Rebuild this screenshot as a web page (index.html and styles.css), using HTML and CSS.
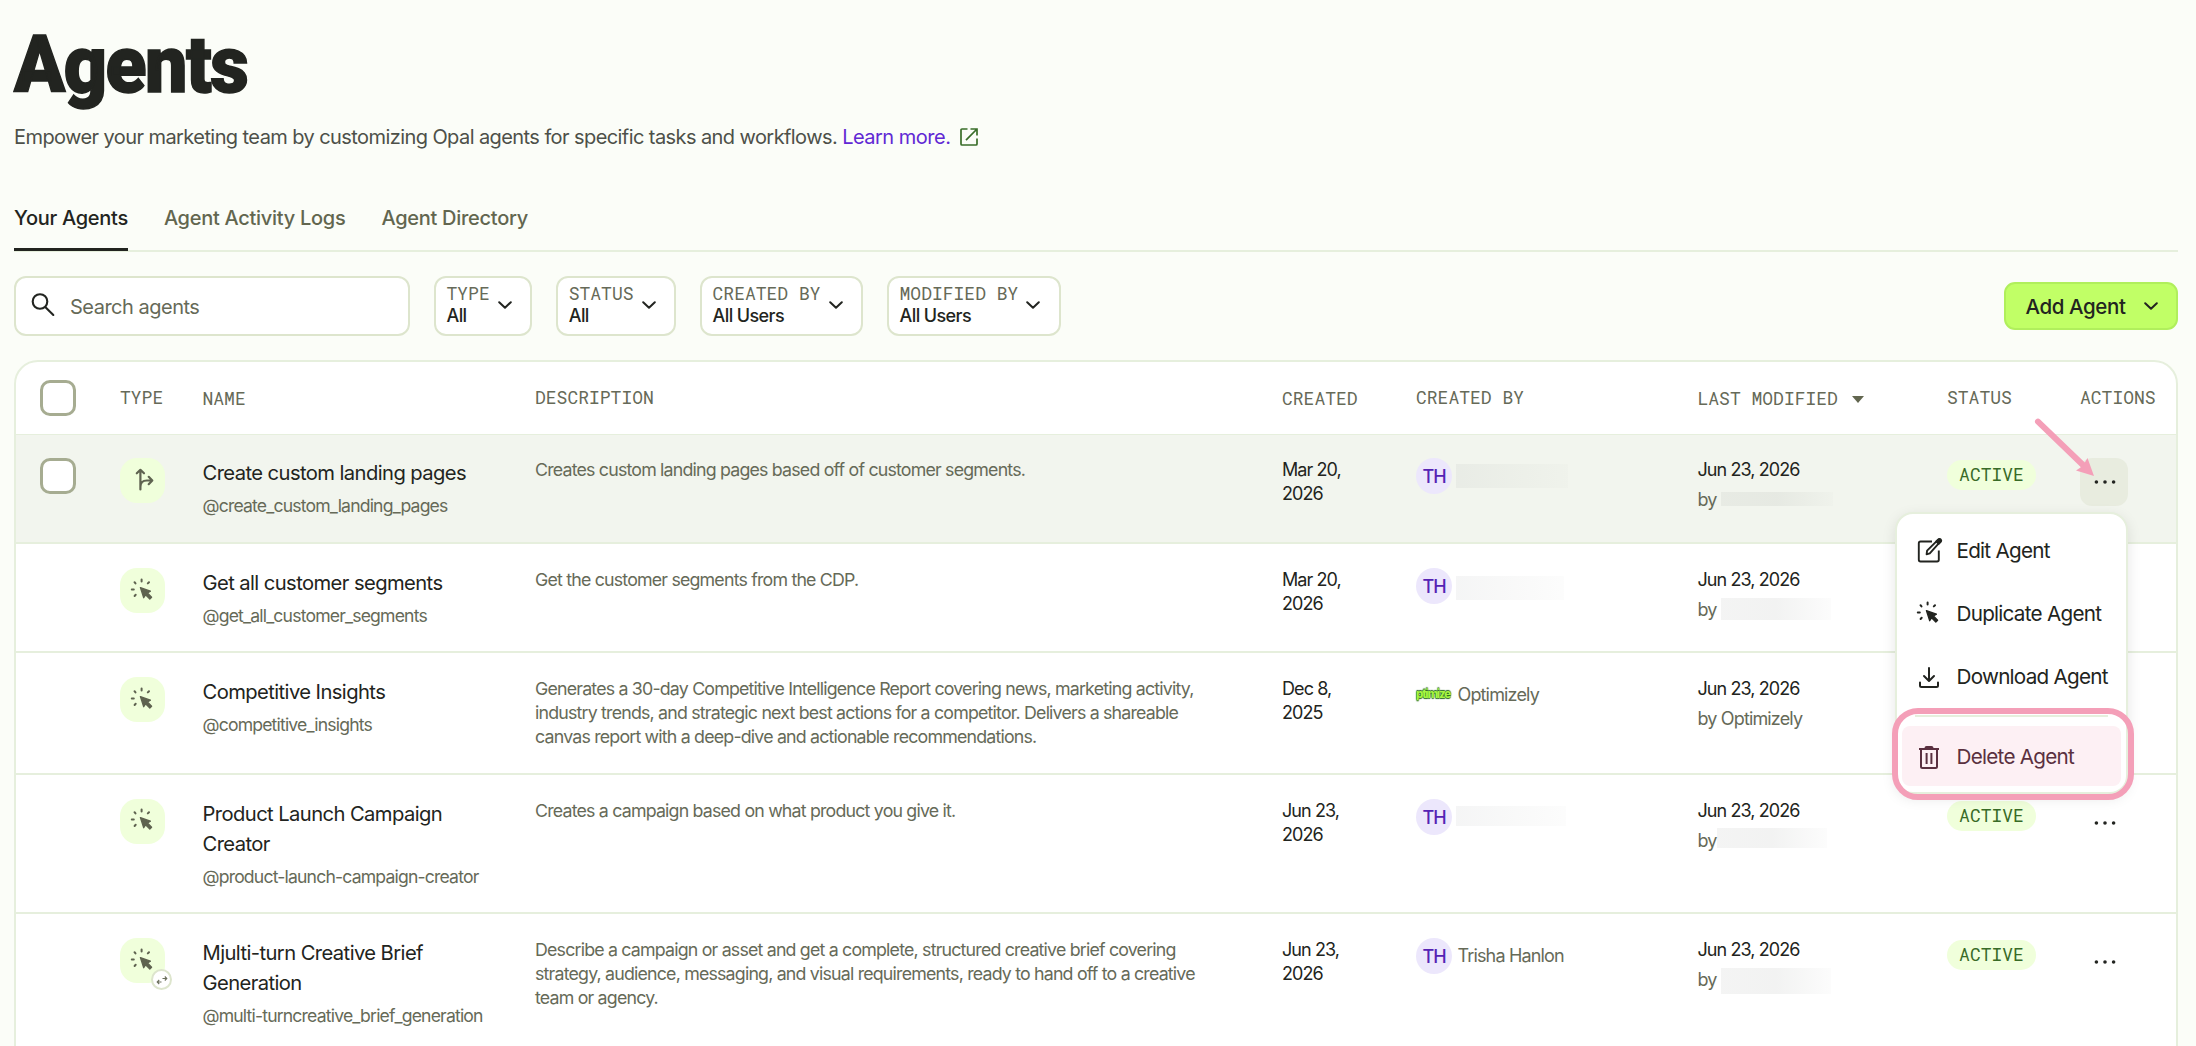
FILE: index.html
```html
<!DOCTYPE html>
<html lang="en">
<head>
    <meta charset="UTF-8">
    <title>Agents</title>
    <link rel="stylesheet" href="styles.css">
</head>
<body>

    <svg class="sprite">
        <symbol id="chevron" viewBox="0 0 14 8"><path d="M1.2 1.2L7 6.8L12.8 1.2" fill="none" stroke="#222420" stroke-width="2" stroke-linecap="round" stroke-linejoin="round"/></symbol>
        <symbol id="cursor" viewBox="0 0 32 32">
            <path d="M3.8 14.4h2M6.5 7.2l1 1.2M13.6 4.6v1.8M21 7.2l-1.2 1.2M6.6 21l1.1-1.2" fill="none" stroke="currentColor" stroke-width="2" stroke-linecap="round"/>
            <path d="M12.4 12.6l10 3.6-2.9 1.8 4.1 4.2-1.8 1.9-4.2-4.2-1.9 2.8z" fill="currentColor" stroke="currentColor" stroke-width="1.3" stroke-linejoin="round"/>
        </symbol>
        <symbol id="dots" viewBox="0 0 48 48"><g fill="#222420"><circle cx="16.4" cy="24" r="1.8"/><circle cx="25" cy="24" r="1.8"/><circle cx="33.6" cy="24" r="1.8"/></g></symbol>
    </svg>

    <h1>Agents</h1>
    <p class="intro">
        <span>Empower your marketing team by customizing Opal agents for specific tasks and workflows.</span>
        <a href="#">Learn more.</a>
        <svg width="18" height="18" viewBox="0 0 18 18" fill="none" stroke="#3a6e2a" stroke-width="1.7"><path d="M7.5 1H2Q1 1 1 2v14q0 1 1 1h14q1 0 1-1v-5.500M10.500 1H17v6.500M17 1L6 12.200"/></svg>
    </p>

    <nav class="tabs">
        <a class="tab active" href="#">Your Agents</a>
        <a class="tab" href="#">Agent Activity Logs</a>
        <a class="tab" href="#">Agent Directory</a>
    </nav>

    <div class="toolbar">
        <div class="search">
            <svg width="24" height="26" viewBox="0 0 24 26" fill="none" stroke="#222420" stroke-width="2.100" stroke-linecap="round"><circle cx="9" cy="9.500" r="7.300"/><path d="M14.500 15.200L22.300 23"/></svg>
            <span>Search agents</span>
        </div>
        <div class="filter">
            <div><div class="mono">TYPE</div><div class="value">All</div></div>
            <svg width="14" height="8"><use href="#chevron"/></svg>
        </div>
        <div class="filter">
            <div><div class="mono">STATUS</div><div class="value">All</div></div>
            <svg width="14" height="8"><use href="#chevron"/></svg>
        </div>
        <div class="filter">
            <div><div class="mono">CREATED BY</div><div class="value">All Users</div></div>
            <svg width="14" height="8"><use href="#chevron"/></svg>
        </div>
        <div class="filter">
            <div><div class="mono">MODIFIED BY</div><div class="value">All Users</div></div>
            <svg width="14" height="8"><use href="#chevron"/></svg>
        </div>
        <button class="add">Add Agent <svg width="14" height="8"><use href="#chevron"/></svg></button>
    </div>

    <div class="table">
        <div class="row head mono">
            <div><span class="checkbox"></span></div>
            <div>TYPE</div>
            <div class="sortable">NAME</div>
            <div>DESCRIPTION</div>
            <div class="sortable">CREATED</div>
            <div>CREATED BY</div>
            <div class="sortable">LAST MODIFIED<span class="caret"></span></div>
            <div>STATUS</div>
            <div>ACTIONS</div>
        </div>

        <div class="row selected r1">
            <div><span class="checkbox"></span></div>
            <div><div class="tile"><svg width="45" height="45" viewBox="0 0 45 45" fill="none" stroke="currentColor" stroke-width="2.200" stroke-linecap="round" stroke-linejoin="round"><path d="M20.400 31.500V12M16.800 15.300L20.400 11.800L24 15.300M20.400 29q0-6.500 6.500-6.500h5M28.700 18.800l3.600 3.700-3.600 3.700"/></svg></div></div>
            <div><div class="name">Create custom landing pages</div><div class="handle">@create_custom_landing_pages</div></div>
            <div class="desc">Creates custom landing pages based off of customer segments.</div>
            <div class="date">Mar 20,<br>2026</div>
            <div class="owner"><span class="avatar">TH</span><span class="redact"></span></div>
            <div><div class="date">Jun 23, 2026</div><div class="by">by <span class="redact thin"></span></div></div>
            <div><span class="pill mono">ACTIVE</span></div>
            <div class="actions">
                <span class="more open"><svg width="48" height="48"><use href="#dots"/></svg></span>
                <div class="menu">
                    <div class="item"><svg width="32" height="32" viewBox="0 0 32 32" fill="none" stroke="#222420" stroke-width="1.900" stroke-linejoin="round"><path d="M18 6.500H6.500Q4.800 6.500 4.800 8.200v16.600q0 1.700 1.700 1.700h16.600q1.700 0 1.700-1.700V15.500"/><path d="M12.600 19.300l.5-3.600L24.200 4.600q1-.9 2 .1t.1 2L15.800 18.400z"/><path d="M22.300 6.500l2.200-2.200q1.200-.8 2.200.2t.2 2.200l-2.200 2.200z" fill="#222420"/></svg><span>Edit Agent</span></div>
                    <div class="item"><svg width="32" height="32"><use href="#cursor"/></svg><span>Duplicate Agent</span></div>
                    <div class="item"><svg width="32" height="32" viewBox="0 0 32 32" fill="none" stroke="#222420" stroke-width="2" stroke-linecap="round" stroke-linejoin="round"><path d="M15 7v12.500M10 15l5 5 5-5M6 21.500v3q0 1.500 1.500 1.500h15q1.500 0 1.500-1.500v-3"/></svg><span>Download Agent</span></div>
                    <div class="line"></div>
                    <div class="item delete"><svg width="32" height="32" viewBox="0 0 32 32" fill="none" stroke="#5a3040" stroke-width="2"><path d="M5 8h20M11.500 7q0-1 1-1h5q1 0 1 1M7 8v17.500q0 1.500 1.500 1.500h13q1.500 0 1.500-1.500V8M12.600 12v11M17.400 12v11"/></svg><span>Delete Agent</span></div>
                </div>
            </div>
        </div>

        <div class="row r2">
            <div></div>
            <div><div class="tile"><svg width="32" height="32"><use href="#cursor"/></svg></div></div>
            <div><div class="name">Get all customer segments</div><div class="handle">@get_all_customer_segments</div></div>
            <div class="desc">Get the customer segments from the CDP.</div>
            <div class="date">Mar 20,<br>2026</div>
            <div class="owner"><span class="avatar">TH</span><span class="redact lower"></span></div>
            <div><div class="date">Jun 23, 2026</div><div class="by">by <span class="redact"></span></div></div>
            <div></div>
            <div></div>
        </div>

        <div class="row r3">
            <div></div>
            <div><div class="tile"><svg width="32" height="32"><use href="#cursor"/></svg></div></div>
            <div><div class="name">Competitive Insights</div><div class="handle">@competitive_insights</div></div>
            <div class="desc">Generates a 30-day Competitive Intelligence Report covering news, marketing activity,<br>industry trends, and strategic next best actions for a competitor. Delivers a shareable<br>canvas report with a deep-dive and actionable recommendations.</div>
            <div class="date">Dec 8,<br>2025</div>
            <div class="owner"><span class="logo">ptimize</span><span class="who">Optimizely</span></div>
            <div><div class="date">Jun 23, 2026</div><div class="by">by Optimizely</div></div>
            <div></div>
            <div></div>
        </div>

        <div class="row r4">
            <div></div>
            <div><div class="tile"><svg width="32" height="32"><use href="#cursor"/></svg></div></div>
            <div><div class="name">Product Launch Campaign<br>Creator</div><div class="handle">@product-launch-campaign-creator</div></div>
            <div class="desc">Creates a campaign based on what product you give it.</div>
            <div class="date">Jun 23,<br>2026</div>
            <div class="owner"><span class="avatar">TH</span><span class="redact short"></span></div>
            <div><div class="date">Jun 23, 2026</div><div class="by">by<span class="redact close"></span></div></div>
            <div><span class="pill mono">ACTIVE</span></div>
            <div><span class="more"><svg width="48" height="48"><use href="#dots"/></svg></span></div>
        </div>

        <div class="row r5">
            <div></div>
            <div>
                <div class="tile"><svg width="32" height="32"><use href="#cursor"/></svg>
                    <span class="badge"><svg width="12" height="12" viewBox="0 0 12 12" fill="none" stroke="#6b6f5c" stroke-width="1.100"><path d="M6.500 4.500h4.200M8.800 2.500l2 2-2 2M5.500 8H1.300M3.200 6l-2 2 2 2"/></svg></span>
                </div>
            </div>
            <div><div class="name">Mjulti-turn Creative Brief<br>Generation</div><div class="handle">@multi-turncreative_brief_generation</div></div>
            <div class="desc">Describe a campaign or asset and get a complete, structured creative brief covering<br>strategy, audience, messaging, and visual requirements, ready to hand off to a creative<br>team or agency.</div>
            <div class="date">Jun 23,<br>2026</div>
            <div class="owner"><span class="avatar">TH</span><span class="who">Trisha Hanlon</span></div>
            <div><div class="date">Jun 23, 2026</div><div class="by">by <span class="redact tall"></span></div></div>
            <div><span class="pill mono">ACTIVE</span></div>
            <div><span class="more"><svg width="48" height="48"><use href="#dots"/></svg></span></div>
        </div>
    </div>

    <!-- callouts -->
    <svg class="arrow" width="64" height="62" viewBox="0 0 64 62"><path d="M6 5.700L51 49" stroke="#f49fb8" stroke-width="6" stroke-linecap="round"/><path d="M62 60L55.500 42L52 48L50 50.500L44 54.500z" fill="#f49fb8"/></svg>
    <div class="ring"></div>

</body>
</html>
```
FILE: styles.css
```css
* { box-sizing: border-box; }
body { margin: 0; padding: 0 18px 0 14px; height: 1046px; overflow: hidden; position: relative; background: #fbfdf8; color: #222420; font-family: Inter, "Liberation Sans", sans-serif; font-size: 18px; line-height: 24px; }
a { text-decoration: none; }
svg { display: block; flex: none; }
.sprite { position: absolute; width: 0; height: 0; }
.mono { font-family: "Roboto Mono", "Liberation Mono", monospace; font-size: 18px; color: #666a58; }

h1 { margin: 0; padding-top: 17px; height: 122px; font: 900 80px/96px Roboto, sans-serif; letter-spacing: -1.6px; -webkit-text-stroke: 1.5px #222420; transform: scaleX(.94); transform-origin: left; }
.intro { display: flex; align-items: center; margin: 0; height: 30px; font-size: 20px; line-height: 30px; letter-spacing: -0.58px; color: #4d5049; }
.intro a { margin: 0 10px 0 5px; letter-spacing: -0.5px; color: #6128d4; }

.tabs { display: flex; gap: 36px; margin-top: 50px; height: 50px; border-bottom: 2px solid #e6efdd; }
.tab { height: 49px; padding-top: 1px; font-size: 20px; line-height: 30px; font-weight: 500; letter-spacing: -0.28px; color: #62664f; }
.tab.active { color: #222420; border-bottom: 3px solid #222420; }

.toolbar { display: flex; align-items: center; margin-top: 24px; height: 60px; }
.search { display: flex; align-items: center; gap: 15px; width: 396px; height: 60px; margin-right: 24px; padding: 1px 0 0 15px; background: #fff; border: 2px solid #dde5cd; border-radius: 12px; font-size: 20px; letter-spacing: -0.5px; color: #666a58; }
.search svg { margin-top: -4px; }
.filter { display: flex; gap: 8px; height: 60px; margin-right: 24px; padding: 4px 18px 0 10.5px; background: #fff; border: 2px solid #dde5cd; border-radius: 12px; }
.filter .mono { line-height: 22px; }
.filter .value { margin-top: 1px; line-height: 22px; font-size: 18px; font-weight: 500; letter-spacing: -0.6px; }
.filter svg { margin: 19px 0.5px 0 0; }
.add { display: flex; align-items: center; gap: 18px; margin-left: auto; width: 174px; height: 48px; padding: 0 0 0 19.5px; background: #c1ff66; border: 2px solid #b0ef5c; border-radius: 11px; font: 500 20.5px Inter, sans-serif; letter-spacing: -0.4px; color: #222420; white-space: nowrap; }

.table { margin-top: 24px; height: 720px; background: #fff; border: 2px solid #e6efdd; border-radius: 24px 24px 0 0; }
.row { display: grid; grid-template-columns: 80px 82.5px 332.5px 747px 134px 281.5px 249.5px 133px 1fr; padding: 24px 0 0 24px; border-bottom: 2px solid #e6efdd; white-space: nowrap; }
.row.head { height: 72px; padding-top: 18px; border: 0; }
.row.head div { height: 36px; line-height: 34px; }
.row.head .sortable { padding-top: 1px; }
.r1 { height: 110px; padding-top: 23px; border-top: 1px solid #e6efdd; }
.r2 { height: 109.3px; }
.r3 { height: 121.7px; }
.r4 { height: 139.3px; }
.r5 { height: 160px; }
.selected { background: #f2f5ee; }
.checkbox { display: block; width: 36px; height: 36px; background: #fff; border: 3px solid #a6ac91; border-radius: 10px; }
.caret { display: inline-block; margin-left: 14px; border: 6px solid transparent; border-top: 7px solid #62664f; border-bottom: 0; vertical-align: 2px; }

.tile { position: relative; width: 45px; height: 45px; background: #f0ffdb; border-radius: 17px; color: #5f6350; }
.tile > svg[width="32"] { position: relative; left: 8px; top: 6.5px; }
.badge { position: absolute; right: -7px; bottom: -7px; display: flex; align-items: center; justify-content: center; width: 21px; height: 21px; background: #fff; border: 2px solid #dde5cd; border-radius: 50%; }
.name { font-size: 20.2px; line-height: 30px; letter-spacing: -0.58px; }
.handle { margin-top: 6px; font-size: 17.6px; letter-spacing: -0.82px; color: #666a58; }
.desc { font-size: 17.8px; letter-spacing: -0.81px; color: #666a58; }
.date { letter-spacing: -0.92px; }
.by { display: flex; gap: 4px; margin-top: 6px; letter-spacing: -0.85px; color: #666a58; }
.owner { display: flex; align-items: center; height: 36px; gap: 4px; }
.avatar { width: 36px; height: 36px; background: #ece7fc; border-radius: 50%; color: #5523b4; font-size: 18px; font-weight: 500; line-height: 37px; text-align: center; letter-spacing: -1px; }
.who { margin-left: 1.5px; letter-spacing: -0.85px; color: #666a58; }
.logo { width: 36px; height: 12px; color: #a6f542; font-size: 11.5px; line-height: 11px; font-weight: 800; letter-spacing: -1.2px; text-shadow: 0 0 1px #1d5c1a, 0 1px 1px #2b6b1f, 0 -1px 1px #2b6b1f; }
.redact { width: 110px; height: 22px; background: linear-gradient(90deg, rgba(110,115,110,.08), rgba(110,115,110,.09) 50%, rgba(110,115,110,.02)); }
.owner .redact { width: 112px; height: 24px; background: linear-gradient(90deg, rgba(110,115,120,.07), rgba(110,115,110,.04) 60%, rgba(110,115,110,.02)); }
.owner .lower { width: 108px; margin-top: 24px; margin-bottom: 20px; }
.owner .short { width: 110px; height: 20px; margin-top: -1px; }
.by .thin { width: 112px; height: 14px; margin-top: 4px; }
.by .close { height: 20px; margin: -1px 0 0 -4px; }
.by .tall { height: 26px; }

.pill { display: block; width: 89px; height: 30px; margin-top: 2px; line-height: 29px; text-align: center; background: #f0ffdb; border-radius: 15px; color: #386b27; }
.actions { position: relative; }
.more { display: block; width: 48px; height: 48px; border-radius: 12px; }
.more.open { background: #e8ecdf; }

.menu { position: absolute; z-index: 2; left: -185px; top: 54px; width: 233px; height: 282px; padding: 5px; background: #fff; border: 2px solid #e6efdd; border-radius: 18px; box-shadow: 0 4px 14px rgba(0,0,0,.1); }
.item { display: flex; align-items: center; gap: 10.5px; height: 63px; padding-left: 12px; font-size: 20.7px; letter-spacing: -0.75px; }
.item.delete { height: 60px; padding-top: 1px; background: #fdf0f4; border-radius: 8px; color: #5a3040; }
.line { height: 2px; margin: 7px 13px 9px; background: #e6efdd; }

.arrow { position: absolute; z-index: 3; left: 2032px; top: 416px; }
.ring { position: absolute; z-index: 3; left: 1892px; top: 708px; width: 242px; height: 92px; border: 6px solid #f49fb8; border-radius: 26px; }
```
